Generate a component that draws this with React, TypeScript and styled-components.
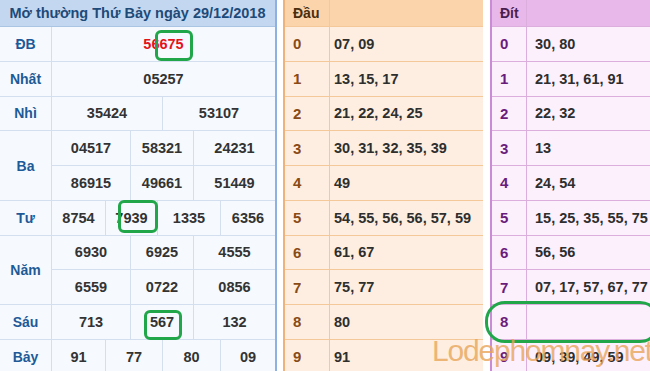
import styled, { createGlobalStyle } from 'styled-components';

const GlobalStyle = createGlobalStyle`
  html, body {
    margin: 0;
    padding: 0;
    background: #ffffff;
  }
`;

interface PrizeRow {
  cols: string;
  vals: string[];
}

interface Prize {
  label: string;
  rows: PrizeRow[];
  red?: boolean;
}

const prizes: Prize[] = [
  { label: 'ĐB', red: true, rows: [{ cols: '1fr', vals: ['56675'] }] },
  { label: 'Nhất', rows: [{ cols: '1fr', vals: ['05257'] }] },
  { label: 'Nhì', rows: [{ cols: '110px 1fr', vals: ['35424', '53107'] }] },
  {
    label: 'Ba',
    rows: [
      { cols: '78px 63px 1fr', vals: ['04517', '58321', '24231'] },
      { cols: '78px 63px 1fr', vals: ['86915', '49661', '51449'] },
    ],
  },
  { label: 'Tư', rows: [{ cols: '53px 52px 63px 1fr', vals: ['8754', '7939', '1335', '6356'] }] },
  {
    label: 'Năm',
    rows: [
      { cols: '78px 63px 1fr', vals: ['6930', '6925', '4555'] },
      { cols: '78px 63px 1fr', vals: ['6559', '0722', '0856'] },
    ],
  },
  { label: 'Sáu', rows: [{ cols: '78px 63px 1fr', vals: ['713', '567', '132'] }] },
  { label: 'Bảy', rows: [{ cols: '53px 57px 58px 1fr', vals: ['91', '77', '80', '09'] }] },
];

const dau = [
  '07, 09',
  '13, 15, 17',
  '21, 22, 24, 25',
  '30, 31, 32, 35, 39',
  '49',
  '54, 55, 56, 56, 57, 59',
  '61, 67',
  '75, 77',
  '80',
  '91',
];

const dit = [
  '30, 80',
  '21, 31, 61, 91',
  '22, 32',
  '13',
  '24, 54',
  '15, 25, 35, 55, 75',
  '56, 56',
  '07, 17, 57, 67, 77',
  '',
  '09, 39, 49, 59',
];

const ROW_H = 34.75;

const Page = styled.div`
  position: relative;
  display: flex;
  width: 650px;
  height: 371px;
  overflow: hidden;
  background: #ffffff;
  font-family: 'Liberation Sans', Arial, sans-serif;
  font-weight: 700;
`;

/* ---------- left: results ---------- */

const ResultPanel = styled.div`
  box-sizing: border-box;
  width: 277px;
  flex: none;
  display: flex;
  flex-direction: column;
  border-right: 2px solid #8db1e0;
  background: #f6f9fd;
`;

const ResultHeader = styled.div`
  height: 27px;
  flex: none;
  display: flex;
  align-items: center;
  justify-content: center;
  background: #c3d8f0;
  color: #1e4a78;
  font-size: 14.5px;
  border-bottom: 1px solid #aac4e4;
  box-sizing: border-box;
`;

const PrizeGroup = styled.div`
  display: flex;
  flex: none;
`;

const PrizeLabel = styled.div<{ $rows: number }>`
  box-sizing: border-box;
  width: 52px;
  flex: none;
  height: ${(p) => p.$rows * ROW_H}px;
  display: flex;
  align-items: center;
  justify-content: center;
  color: #1d5a98;
  font-size: 14px;
  border-right: 1px solid #d3dfee;
  border-bottom: 1px solid #d3dfee;
`;

const PrizeRows = styled.div`
  flex: 1;
  display: flex;
  flex-direction: column;
`;

const ValueRow = styled.div<{ $cols: string }>`
  box-sizing: border-box;
  display: grid;
  grid-template-columns: ${(p) => p.$cols};
  height: ${ROW_H}px;
  border-bottom: 1px solid #d3dfee;
`;

const Value = styled.div<{ $red?: boolean }>`
  display: flex;
  align-items: center;
  justify-content: center;
  font-size: 14.5px;
  color: ${(p) => (p.$red ? '#e3141b' : '#333333')};
  & + & {
    border-left: 1px solid #d3dfee;
  }
`;

/* ---------- right: loto tables ---------- */

const LotoPanel = styled.div<{ $edge: string; $body: string; $width: string; $gap: number }>`
  box-sizing: border-box;
  width: ${(p) => p.$width};
  flex: none;
  margin-left: ${(p) => p.$gap}px;
  display: flex;
  flex-direction: column;
  border-left: 2px solid ${(p) => p.$edge};
  background: ${(p) => p.$body};
`;

const LotoRow = styled.div<{ $first: number; $line: string; $head?: string; $h: number }>`
  box-sizing: border-box;
  display: grid;
  grid-template-columns: ${(p) => p.$first}px 1fr;
  height: ${(p) => p.$h}px;
  flex: none;
  background: ${(p) => p.$head || 'transparent'};
  border-bottom: 1px solid ${(p) => p.$line};
  & > div + div {
    border-left: 1px solid ${(p) => p.$line};
  }
`;

const HeadCell = styled.div<{ $color: string }>`
  display: flex;
  align-items: center;
  padding-left: 8px;
  font-size: 14px;
  color: ${(p) => p.$color};
`;

const DigitCell = styled.div<{ $color: string }>`
  display: flex;
  align-items: center;
  padding-left: 8px;
  font-size: 15px;
  color: ${(p) => p.$color};
`;

const NumCell = styled.div<{ $pad: number }>`
  display: flex;
  align-items: center;
  padding-left: ${(p) => p.$pad}px;
  font-size: 14.5px;
  color: #2e2e2e;
  white-space: nowrap;
`;

/* ---------- overlays ---------- */

const Mark = styled.div<{ $x: number; $y: number; $w: number; $h: number; $r: number }>`
  position: absolute;
  left: ${(p) => p.$x}px;
  top: ${(p) => p.$y}px;
  width: ${(p) => p.$w}px;
  height: ${(p) => p.$h}px;
  box-sizing: border-box;
  border: 3px solid #22a64a;
  border-radius: ${(p) => p.$r}px;
  pointer-events: none;
`;

const Watermark = styled.div`
  position: absolute;
  left: 432px;
  top: 334px;
  font-family: 'Liberation Sans', Arial, sans-serif;
  font-weight: 400;
  font-size: 30px;
  letter-spacing: -1.2px;
  color: rgba(232, 164, 88, 0.8);
  white-space: nowrap;
  pointer-events: none;
`;

function LotoTable({
  title,
  rows,
  width,
  gap,
  first,
  edge,
  body,
  head,
  line,
  digit,
  titleColor,
  pad,
}: {
  title: string;
  rows: string[];
  width: string;
  gap: number;
  first: number;
  edge: string;
  body: string;
  head: string;
  line: string;
  digit: string;
  titleColor: string;
  pad: number;
}) {
  return (
    <LotoPanel $edge={edge} $body={body} $width={width} $gap={gap}>
      <LotoRow $first={first} $line={line} $head={head} $h={27}>
        <HeadCell $color={titleColor}>{title}</HeadCell>
        <HeadCell $color={titleColor} />
      </LotoRow>
      {rows.map((r, i) => (
        <LotoRow key={i} $first={first} $line={line} $h={ROW_H}>
          <DigitCell $color={digit}>{i}</DigitCell>
          <NumCell $pad={pad}>{r}</NumCell>
        </LotoRow>
      ))}
    </LotoPanel>
  );
}

export default function App() {
  return (
    <>
      <GlobalStyle />
      <Page>
        <ResultPanel>
          <ResultHeader>Mở thường Thứ Bảy ngày 29/12/2018</ResultHeader>
          {prizes.map((p) => (
            <PrizeGroup key={p.label}>
              <PrizeLabel $rows={p.rows.length}>{p.label}</PrizeLabel>
              <PrizeRows>
                {p.rows.map((r, i) => (
                  <ValueRow key={i} $cols={r.cols}>
                    {r.vals.map((v, j) => (
                      <Value key={j} $red={p.red}>
                        {v}
                      </Value>
                    ))}
                  </ValueRow>
                ))}
              </PrizeRows>
            </PrizeGroup>
          ))}
        </ResultPanel>

        <LotoTable
          title="Đầu"
          rows={dau}
          width="200px"
          gap={6}
          first={44}
          edge="#efb27a"
          body="#fdeee1"
          head="#fcd4ac"
          line="#f4c898"
          digit="#8a4a14"
          titleColor="#4a2e10"
          pad={4}
        />
        <LotoTable
          title="Đít"
          rows={dit}
          width="160px"
          gap={7}
          first={34}
          edge="#c98bd6"
          body="#fcf0fc"
          head="#e8b8ea"
          line="#dcaede"
          digit="#6a1c7c"
          titleColor="#4a1f50"
          pad={8}
        />

        <Mark $x={155} $y={30} $w={38} $h={31} $r={6} />
        <Mark $x={118} $y={200} $w={40} $h={33} $r={6} />
        <Mark $x={144} $y={310} $w={38} $h={30} $r={6} />
        <Mark $x={485} $y={301} $w={175} $h={42} $r={20} />
        <Watermark>Lodephomnay.net</Watermark>
      </Page>
    </>
  );
}
